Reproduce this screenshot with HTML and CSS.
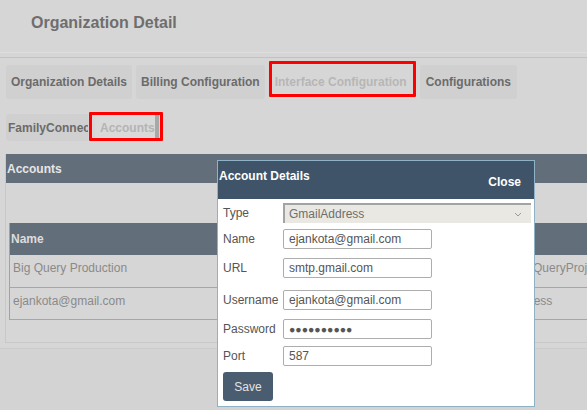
FILE: index.html
```html
<!DOCTYPE html>
<html lang="en">
<head>
<meta charset="utf-8">
<title>Organization Detail</title>
<link rel="stylesheet" href="styles.css">
</head>
<body>
<div class="page">
  <header class="page-header">
    <h1 class="page-title">Organization Detail</h1>
  </header>
  <div class="tabs-area">
    <nav class="tabs tabs-main">
      <div class="tab">Organization Details</div>
      <div class="tab">Billing Configuration</div>
      <div class="tab tab-current marked">Interface Configuration</div>
      <div class="tab tab-last">Configurations</div>
    </nav>
    <nav class="tabs tabs-sub">
      <div class="tab tab-clip">FamilyConnec</div>
      <div class="subtab marked-sub"><span class="subtab-label">Accounts</span></div>
    </nav>
  </div>
  <section class="panel">
    <div class="panel-head">Accounts</div>
    <div class="panel-body">
      <table class="grid">
        <thead>
          <tr><th class="col-name">Name</th><th>Type</th></tr>
        </thead>
        <tbody>
          <tr><td>Big Query Production</td><td>GoogleBigQueryProject</td></tr>
          <tr><td>ejankota@gmail.com</td><td>GmailAddress</td></tr>
        </tbody>
      </table>
    </div>
  </section>
  <div class="page-foot"></div>
</div>

<div class="modal">
  <div class="modal-head">
    <span class="modal-title">Account Details</span>
    <span class="modal-close">Close</span>
  </div>
  <div class="modal-body">
    <div class="field">
      <label class="field-label">Type</label>
      <div class="select">
        <span>GmailAddress</span>
        <svg class="chev" width="8" height="5" viewBox="0 0 8 5"><path d="M1 1 L4 4 L7 1" fill="none" stroke="#9a9a9a" stroke-width="1"/></svg>
      </div>
    </div>
    <div class="field f-name">
      <label class="field-label">Name</label>
      <input class="input" type="text" value="ejankota@gmail.com">
    </div>
    <div class="field f-url">
      <label class="field-label">URL</label>
      <input class="input" type="text" value="smtp.gmail.com">
    </div>
    <div class="field f-user">
      <label class="field-label">Username</label>
      <input class="input" type="text" value="ejankota@gmail.com">
    </div>
    <div class="field f-pass">
      <label class="field-label">Password</label>
      <div class="input input-pass">●●●●●●●●●●</div>
    </div>
    <div class="field f-port">
      <label class="field-label">Port</label>
      <input class="input" type="text" value="587">
    </div>
    <button class="btn-save" type="button">Save</button>
  </div>
</div>
</body>
</html>
```
FILE: styles.css
```css
html, body {
  margin: 0;
  padding: 0;
}
body {
  width: 587px;
  height: 410px;
  overflow: hidden;
  position: relative;
  background: #d6d6d6;
  font-family: "Liberation Sans", Arial, sans-serif;
}

.page-header {
  box-sizing: border-box;
  height: 53px;
  padding: 14px 0 0 31px;
  border-bottom: 1px solid #dedede;
}
.page-title {
  margin: 0;
  font-size: 16px;
  font-weight: bold;
  color: #6e6e6e;
  line-height: normal;
}

.tabs-area {
  margin-top: 4px;
  border-top: 1px solid #c2c2c2;
  padding: 7px 0 0 6px;
}
.tabs {
  display: flex;
}
.tabs-main .tab + .tab {
  margin-left: 4px;
}
.tabs-main .tab-last {
  margin-left: 5px;
}
.tab {
  position: relative;
  box-sizing: border-box;
  height: 34px;
  padding: 0 5px;
  display: flex;
  align-items: center;
  background: #d0d0d0;
  border-radius: 3px;
  font-size: 12px;
  font-weight: bold;
  color: #6b6b6b;
  white-space: nowrap;
}
.tab-current {
  background: transparent;
  color: #b6b6b6;
  padding: 0 9px 0 6px;
}
.tab-last {
  padding: 0 6px;
}
.marked::after {
  content: "";
  position: absolute;
  left: 0;
  right: 0;
  top: -4px;
  height: 36px;
  box-sizing: border-box;
  border: 3px solid #ff0000;
  border-radius: 1px;
}

.tabs-sub {
  margin-top: 15px;
}
.tab-clip {
  width: 82px;
  height: 27px;
  padding: 0 0 0 2px;
  overflow: hidden;
  display: block;
  line-height: 28px;
  border-radius: 3px 0 0 3px;
}
.subtab {
  position: relative;
  box-sizing: border-box;
  width: 74px;
  height: 27px;
  margin-left: 1px;
  padding: 0 4px 0 6px;
  display: flex;
}
.subtab-label {
  display: flex;
  align-items: center;
  padding-left: 5px;
  background: #d9d9d9;
  border-right: 4px solid #a8a8a8;
  font-size: 12px;
  font-weight: bold;
  color: #b4b4b4;
  white-space: nowrap;
  flex: 1;
}
.marked-sub::after {
  content: "";
  position: absolute;
  left: 0;
  right: 0;
  top: -2px;
  bottom: 0;
  box-sizing: border-box;
  border: 3px solid #ff0000;
  border-radius: 1px;
}

.panel {
  margin: 13px 0 0 5px;
  width: 640px;
  border: 1px solid #c8c8c8;
  border-top: none;
}
.panel-head {
  height: 29px;
  display: flex;
  align-items: center;
  padding-left: 1px;
  background: #636e7b;
  color: #e6e6e6;
  font-size: 12px;
  font-weight: bold;
}
.panel-body {
  padding: 40px 0 22px 3px;
}
.grid {
  border-collapse: collapse;
  width: 630px;
  border-left: 1px solid #a2a2a2;
  font-size: 12px;
}
.grid th {
  height: 32px;
  padding: 0 0 0 1px;
  background: #636e7b;
  color: #dcdcdc;
  font-weight: bold;
  text-align: left;
}
.grid .col-name {
  width: 463px;
}
.grid td {
  box-sizing: border-box;
  height: 32px;
  padding: 6px 0 0 3px;
  vertical-align: top;
  color: #8a8a8a;
  border-bottom: 1px solid #a6a6a6;
}

.page-foot {
  margin-top: 5px;
  border-top: 1px solid #cbcbcb;
  height: 80px;
  background: #d3d3d3;
}

.modal {
  position: absolute;
  left: 217px;
  top: 160px;
  width: 318px;
  height: 247px;
  box-sizing: border-box;
  border: 1px solid #8fb2c6;
  background: #ffffff;
}
.modal-head {
  height: 38px;
  display: flex;
  justify-content: space-between;
  align-items: flex-start;
  padding: 0 13px 0 1px;
  background: #3f5469;
  color: #ffffff;
  font-size: 12px;
  font-weight: bold;
}
.modal-title {
  padding-top: 8px;
}
.modal-close {
  padding-top: 14px;
}
.modal-body {
  padding: 4px 0 0 5px;
}
.field {
  display: flex;
  align-items: center;
  height: 20px;
}
.field-label {
  width: 60px;
  font-size: 12px;
  color: #555555;
}
.f-name { margin-top: 6px; }
.f-url { margin-top: 9px; }
.f-user { margin-top: 12px; }
.f-pass { margin-top: 9px; }
.f-port { margin-top: 7px; }

.select {
  box-sizing: border-box;
  width: 248px;
  height: 20px;
  display: flex;
  align-items: center;
  justify-content: space-between;
  padding: 0 9px 0 4px;
  background: #e9e8e3;
  border-top: 2px solid #a3a3a3;
  border-left: 2px solid #a3a3a3;
  font-size: 12px;
  color: #6f6f6f;
}
.chev {
  display: block;
}
.input {
  box-sizing: border-box;
  width: 149px;
  height: 20px;
  margin: 0;
  padding: 0 0 0 5px;
  border: 1px solid #adadad;
  border-radius: 2px;
  background: #ffffff;
  font-family: "Liberation Sans", Arial, sans-serif;
  font-size: 12px;
  color: #555555;
  outline: none;
}
.input-pass {
  display: flex;
  align-items: center;
  font-size: 10.5px;
  color: #555555;
  letter-spacing: 0;
}
.btn-save {
  display: block;
  margin-top: 6px;
  width: 50px;
  height: 29px;
  padding: 0;
  border: none;
  border-radius: 3px;
  background: #4a5d70;
  color: #e2e2e2;
  font-family: "Liberation Sans", Arial, sans-serif;
  font-size: 12px;
}
```
